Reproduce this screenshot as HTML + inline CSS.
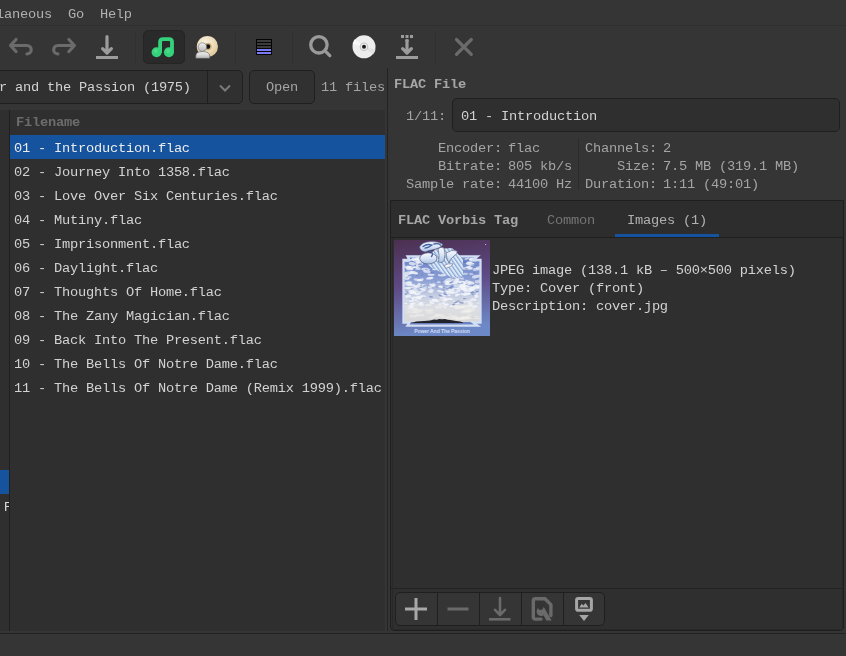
<!DOCTYPE html>
<html><head><meta charset="utf-8">
<style>
*{margin:0;padding:0;box-sizing:border-box}
html,body{width:846px;height:656px;overflow:hidden;background:#353535}
body{position:relative;font-family:"Liberation Mono",monospace;font-size:13.7px;letter-spacing:-0.22px;color:#d2d2d2}
.a{position:absolute}
.t{position:absolute;white-space:pre;line-height:16px;margin-top:2px;will-change:transform}
svg{position:absolute;overflow:visible}
</style></head><body>
<!-- menu bar -->
<div class="a" style="left:0;top:25px;width:846px;height:1px;background:#2f2f2f"></div>
<div class="t" style="left:-52px;top:5px;color:#b0b0b0">Miscellaneous  Go  Help</div>

<!-- toolbar -->
<div class="a" style="left:135px;top:31px;width:1px;height:33px;background:#303030"></div>
<div class="a" style="left:235px;top:31px;width:1px;height:33px;background:#303030"></div>
<div class="a" style="left:292px;top:31px;width:1px;height:33px;background:#303030"></div>
<div class="a" style="left:435px;top:31px;width:1px;height:33px;background:#303030"></div>
<div class="a" style="left:143px;top:30px;width:42px;height:34px;border-radius:5px;background:#2a2a2a;border:1px solid #242424"></div>

<svg style="left:0;top:0" width="846" height="100" viewBox="0 0 846 100">
 <g fill="none" stroke-linecap="round" stroke-linejoin="round" stroke-width="3.2">
  <path stroke="#6b6b6b" d="M16 39.5 L10.5 45.5 L16 51.5 M10.5 45.5 H27 A4.2 4.2 0 0 1 27 53.9"/>
  <path stroke="#6b6b6b" transform="translate(84.9 0) scale(-1 1)" d="M16 39.5 L10.5 45.5 L16 51.5 M10.5 45.5 H27 A4.2 4.2 0 0 1 27 53.9"/>
  <path stroke="#9c9c9c" d="M107 36.7 V52.5 M102.6 48.6 L107 53 L111.4 48.6"/>
  <path stroke="#9c9c9c" d="M407 40.5 V52.5 M402.6 48.6 L407 53 L411.4 48.6" />
  <circle cx="318.9" cy="44.8" r="8.2" stroke="#9a9a9a" stroke-width="3.3"/>
  <path stroke="#9a9a9a" stroke-width="3.3" d="M324.8 50.7 L329.8 55.7"/>
  <path stroke="#6b6b6b" d="M456.5 39.5 L471.3 54.3 M471.3 39.5 L456.5 54.3"/>
  <path stroke="#34d27b" stroke-width="3.8" stroke-linecap="butt" d="M160.1 53 V42 Q160.1 39.1 163 39.1 H169.1 Q172 39.1 172 42 V53"/>
 </g>
 <rect x="96" y="56" width="22" height="3" fill="#9c9c9c"/>
 <rect x="396" y="56" width="22" height="3" fill="#9c9c9c"/>
 <path fill="#9c9c9c" d="M405.3 39.5 h3.4 v2 h-3.4z"/>
 <rect x="401" y="35" width="3" height="3" fill="#9c9c9c"/>
 <rect x="405.5" y="35" width="3" height="3" fill="#9c9c9c"/>
 <rect x="410" y="35" width="3" height="3" fill="#9c9c9c"/>
 <circle cx="156.6" cy="52.3" r="5" fill="#34d27b"/>
 <circle cx="168.9" cy="52.3" r="5" fill="#34d27b"/>
 <circle cx="155.8" cy="51" r="2" fill="#5fe39a" opacity=".5"/>
 <circle cx="168.1" cy="51" r="2" fill="#5fe39a" opacity=".5"/>
 <!-- equalizer -->
 <rect x="256" y="39" width="16" height="16" fill="#050505"/>
 <rect x="257" y="40" width="14" height="2" fill="#3c3c3c"/>
 <rect x="257" y="43" width="14" height="2" fill="#3c3c3c"/>
 <rect x="257" y="46" width="14" height="2" fill="#3c3c3c"/>
 <rect x="257" y="49" width="14" height="2" fill="#7a7af5"/>
 <rect x="257" y="52" width="14" height="2" fill="#7a7af5"/>
 <!-- white cd -->
 <circle cx="364" cy="46.8" r="11.5" fill="#eeeeee"/>
 <path d="M364 46.8 L352.5 44 A11.5 11.5 0 0 1 355 39 Z" fill="#f8f8f8"/>
 <path d="M364 46.8 L375.5 49.6 A11.5 11.5 0 0 1 373 54.6 Z" fill="#e2e2e2"/>
 <circle cx="364" cy="46.8" r="4.3" fill="#c4c4c4"/>
 <circle cx="364" cy="46.8" r="3.2" fill="#ececec"/>
 <circle cx="364" cy="46.8" r="2" fill="#1e1e1e"/>
 <!-- cd with person -->
 <defs>
  <radialGradient id="cdg" cx="0.4" cy="0.35" r="0.7">
   <stop offset="0" stop-color="#faf4e6"/><stop offset="0.6" stop-color="#ecdcb8"/><stop offset="1" stop-color="#dcc494"/>
  </radialGradient>
  <linearGradient id="pg" x1="0" y1="0" x2="0" y2="1">
   <stop offset="0" stop-color="#f4f4f4"/><stop offset="1" stop-color="#b8b8b8"/>
  </linearGradient>
 </defs>
 <circle cx="207.4" cy="46.6" r="10.6" fill="url(#cdg)"/>
 <circle cx="208" cy="46.6" r="3.8" fill="#d2b47e"/>
 <circle cx="208" cy="46.6" r="2.3" fill="#141414"/>
 <path d="M195.8 58.3 V56 Q195.8 51.6 202.7 51.6 Q209.7 51.6 209.7 56 V58.3 Z" fill="url(#pg)" stroke="#5a5a5a" stroke-width=".6"/>
 <circle cx="202.4" cy="47.1" r="4.3" fill="url(#pg)" stroke="#666" stroke-width=".6"/>
 <!-- combo chevron -->
 <path d="M220 85.5 L225 90.5 L230 85.5" fill="none" stroke="#7a7a7a" stroke-width="2"/>
</svg>

<!-- combo -->
<div class="a" style="left:-10px;top:70px;width:253px;height:34px;border:1px solid #1f1f1f;border-radius:5px;background:#303030"></div>
<div class="a" style="left:207px;top:71px;width:1px;height:32px;background:#1f1f1f"></div>
<div class="t" style="left:-1px;top:78px">r and the Passion (1975)</div>
<!-- open button -->
<div class="a" style="left:249px;top:70px;width:66px;height:34px;border:1px solid #1f1f1f;border-radius:5px;background:#313131"></div>
<div class="t" style="left:266px;top:78px;color:#a4a4a4">Open</div>
<div class="t" style="left:321px;top:78px;color:#a4a4a4">11 files</div>
<svg style="left:0;top:0" width="846" height="110" viewBox="0 0 846 110">
 <path d="M220 85.5 L225 90.5 L230 85.5" fill="none" stroke="#7a7a7a" stroke-width="2"/>
</svg>

<!-- left file list -->
<div class="a" style="left:0;top:110px;width:385px;height:521px;background:#2f2f2f"></div>
<div class="a" style="left:9px;top:110px;width:1px;height:521px;background:#1f1f1f"></div>
<div class="a" style="left:387px;top:68px;width:1px;height:563px;background:#232323"></div>
<div class="a" style="left:0;top:633px;width:846px;height:1px;background:#222222"></div>

<div class="t" style="left:16px;top:113px;font-weight:bold;color:#6c6c6c">Filename</div>
<div class="a" style="left:10px;top:135px;width:375px;height:24px;background:#15539e"></div>
<div class="t" style="left:14px;top:139px;color:#ececec">01 - Introduction.flac</div>
<div class="t" style="left:14px;top:163px">02 - Journey Into 1358.flac</div>
<div class="t" style="left:14px;top:187px">03 - Love Over Six Centuries.flac</div>
<div class="t" style="left:14px;top:211px">04 - Mutiny.flac</div>
<div class="t" style="left:14px;top:235px">05 - Imprisonment.flac</div>
<div class="t" style="left:14px;top:259px">06 - Daylight.flac</div>
<div class="t" style="left:14px;top:283px">07 - Thoughts Of Home.flac</div>
<div class="t" style="left:14px;top:307px">08 - The Zany Magician.flac</div>
<div class="t" style="left:14px;top:331px">09 - Back Into The Present.flac</div>
<div class="t" style="left:14px;top:355px">10 - The Bells Of Notre Dame.flac</div>
<div class="t" style="left:14px;top:379px">11 - The Bells Of Notre Dame (Remix 1999).flac</div>

<div class="a" style="left:0;top:470px;width:9px;height:24px;background:#15539e"></div>
<div class="t" style="left:4px;top:497px;font-family:'Liberation Sans';letter-spacing:0;font-size:13px;color:#d8d8d8;width:5px;overflow:hidden">F</div>

<!-- right panel -->
<div class="t" style="left:394px;top:75px;font-weight:bold;color:#a6a6a6">FLAC File</div>
<div class="t" style="left:406px;top:107px;color:#a4a4a4">1/11:</div>
<div class="a" style="left:452px;top:98px;width:388px;height:34px;border:1px solid #1f1f1f;border-radius:5px;background:#2f2f2f"></div>
<div class="t" style="left:461px;top:107px">01 - Introduction</div>

<div class="t" style="left:438px;top:139px;color:#a4a4a4">Encoder:</div>
<div class="t" style="left:438px;top:157px;color:#a4a4a4">Bitrate:</div>
<div class="t" style="left:406px;top:175px;color:#a4a4a4">Sample rate:</div>
<div class="t" style="left:508px;top:139px;color:#a4a4a4">flac</div>
<div class="t" style="left:508px;top:157px;color:#a4a4a4">805 kb/s</div>
<div class="t" style="left:508px;top:175px;color:#a4a4a4">44100 Hz</div>
<div class="a" style="left:578px;top:138px;width:1px;height:52px;background:#2c2c2c"></div>
<div class="t" style="left:585px;top:139px;color:#a4a4a4">Channels:</div>
<div class="t" style="left:617px;top:157px;color:#a4a4a4">Size:</div>
<div class="t" style="left:585px;top:175px;color:#a4a4a4">Duration:</div>
<div class="t" style="left:663px;top:139px;color:#a4a4a4">2</div>
<div class="t" style="left:663px;top:157px;color:#a4a4a4">7.5 MB (319.1 MB)</div>
<div class="t" style="left:663px;top:175px;color:#a4a4a4">1:11 (49:01)</div>

<!-- tab widget -->
<div class="a" style="left:390px;top:200px;width:454px;height:431px;border:1px solid #1f1f1f;border-radius:0 0 4px 4px;background:#2f2f2f"></div>
<div class="a" style="left:391px;top:201px;width:452px;height:36px;background:#2d2d2d"></div>
<div class="a" style="left:391px;top:237px;width:452px;height:1px;background:#1f1f1f"></div>
<div class="t" style="left:398px;top:211px;font-weight:bold;color:#a6a6a6">FLAC Vorbis Tag</div>
<div class="t" style="left:547px;top:211px;color:#757575">Common</div>
<div class="t" style="left:627px;top:211px;color:#b0b0b0">Images (1)</div>
<div class="a" style="left:615px;top:234px;width:104px;height:3px;background:#15539e"></div>

<svg style="left:394px;top:240px" width="96" height="96" viewBox="0 0 96 96">
 <defs>
  <linearGradient id="cbg" x1="0" y1="0" x2="0.15" y2="1">
   <stop offset="0" stop-color="#4c3050"/><stop offset="0.5" stop-color="#5e4a86"/><stop offset="1" stop-color="#6d88c6"/>
  </linearGradient>
  <linearGradient id="sky" x1="0" y1="0" x2="0" y2="1">
   <stop offset="0" stop-color="#6a82c8"/><stop offset="0.35" stop-color="#8a9ed4"/><stop offset="0.6" stop-color="#c6cee2"/><stop offset="0.8" stop-color="#dcdee2"/><stop offset="1" stop-color="#d8d8d8"/>
  </linearGradient>
  <linearGradient id="lface" x1="0" y1="0" x2="0" y2="1">
   <stop offset="0" stop-color="#f8fafe"/><stop offset="0.5" stop-color="#d8e4f4"/><stop offset="1" stop-color="#a8c0e4"/>
  </linearGradient>
  <pattern id="stripes" width="3.2" height="3.2" patternUnits="userSpaceOnUse" patternTransform="rotate(-35)">
   <rect width="3.2" height="3.2" fill="#dce8f6"/><rect width="1.2" height="3.2" fill="#86a6d4"/>
  </pattern>
  <clipPath id="skyclip"><path d="M10 82 V20 H15.5 L13.5 16.3 H83.5 L79 20 H86.5 V82 Z"/></clipPath>
 </defs>
 <rect width="96" height="96" fill="url(#cbg)"/>
 <path d="M10 82 V20 H15.5 L13.5 16.3 H83.5 L79 20 H86.5 V82 Z" fill="url(#sky)"/>
 <g clip-path="url(#skyclip)"><ellipse cx="23.2" cy="39.8" rx="3.6" ry="1.4" fill="#f2f5fa" fill-opacity="0.63" transform="rotate(12 23.2 39.8)"/><ellipse cx="70.8" cy="33.9" rx="3.3" ry="1.1" fill="#f2f5fa" fill-opacity="0.55" transform="rotate(-5 70.8 33.9)"/><ellipse cx="54.3" cy="19.3" rx="4.0" ry="1.4" fill="#f2f5fa" fill-opacity="0.63" transform="rotate(-18 54.3 19.3)"/><ellipse cx="84.8" cy="41.4" rx="4.2" ry="1.8" fill="#f2f5fa" fill-opacity="0.56" transform="rotate(-7 84.8 41.4)"/><ellipse cx="47.8" cy="20.8" rx="4.4" ry="1.6" fill="#f2f5fa" fill-opacity="0.60" transform="rotate(13 47.8 20.8)"/><ellipse cx="20.2" cy="47.6" rx="3.1" ry="1.3" fill="#f2f5fa" fill-opacity="0.67" transform="rotate(-1 20.2 47.6)"/><ellipse cx="24.8" cy="18.2" rx="4.2" ry="1.4" fill="#f2f5fa" fill-opacity="0.82" transform="rotate(-12 24.8 18.2)"/><ellipse cx="82.7" cy="46.5" rx="3.9" ry="1.8" fill="#f2f5fa" fill-opacity="0.75" transform="rotate(9 82.7 46.5)"/><ellipse cx="20.1" cy="32.7" rx="4.1" ry="1.4" fill="#f2f5fa" fill-opacity="0.87" transform="rotate(16 20.1 32.7)"/><ellipse cx="41.3" cy="29.1" rx="3.1" ry="1.2" fill="#f2f5fa" fill-opacity="0.90" transform="rotate(-5 41.3 29.1)"/><ellipse cx="13.0" cy="20.1" rx="3.8" ry="1.9" fill="#f2f5fa" fill-opacity="0.72" transform="rotate(-0 13.0 20.1)"/><ellipse cx="51.7" cy="41.7" rx="2.6" ry="1.1" fill="#f2f5fa" fill-opacity="0.74" transform="rotate(5 51.7 41.7)"/><ellipse cx="24.4" cy="22.6" rx="2.9" ry="1.4" fill="#f2f5fa" fill-opacity="0.67" transform="rotate(4 24.4 22.6)"/><ellipse cx="33.7" cy="20.4" rx="2.2" ry="1.0" fill="#f2f5fa" fill-opacity="0.82" transform="rotate(-5 33.7 20.4)"/><ellipse cx="61.6" cy="39.3" rx="4.2" ry="2.1" fill="#f2f5fa" fill-opacity="0.69" transform="rotate(20 61.6 39.3)"/><ellipse cx="82.1" cy="36.5" rx="4.2" ry="1.7" fill="#f2f5fa" fill-opacity="0.68" transform="rotate(-10 82.1 36.5)"/><ellipse cx="75.8" cy="22.4" rx="2.2" ry="1.0" fill="#f2f5fa" fill-opacity="0.82" transform="rotate(-1 75.8 22.4)"/><ellipse cx="72.9" cy="18.7" rx="2.6" ry="0.9" fill="#f2f5fa" fill-opacity="0.70" transform="rotate(-13 72.9 18.7)"/><ellipse cx="16.1" cy="28.2" rx="4.2" ry="2.1" fill="#f2f5fa" fill-opacity="0.81" transform="rotate(-1 16.1 28.2)"/><ellipse cx="29.7" cy="48.6" rx="3.3" ry="1.5" fill="#f2f5fa" fill-opacity="0.56" transform="rotate(-12 29.7 48.6)"/><ellipse cx="73.0" cy="43.2" rx="4.2" ry="1.8" fill="#f2f5fa" fill-opacity="0.70" transform="rotate(3 73.0 43.2)"/><ellipse cx="73.9" cy="27.2" rx="3.3" ry="1.2" fill="#f2f5fa" fill-opacity="0.82" transform="rotate(-20 73.9 27.2)"/><ellipse cx="61.7" cy="48.5" rx="2.1" ry="0.9" fill="#f2f5fa" fill-opacity="0.78" transform="rotate(14 61.7 48.5)"/><ellipse cx="54.2" cy="25.5" rx="3.0" ry="1.5" fill="#f2f5fa" fill-opacity="0.87" transform="rotate(-15 54.2 25.5)"/><ellipse cx="18.0" cy="20.1" rx="2.1" ry="0.8" fill="#f2f5fa" fill-opacity="0.60" transform="rotate(15 18.0 20.1)"/><ellipse cx="59.5" cy="21.2" rx="3.3" ry="1.2" fill="#f2f5fa" fill-opacity="0.72" transform="rotate(-11 59.5 21.2)"/><ellipse cx="23.3" cy="23.1" rx="2.9" ry="1.3" fill="#f2f5fa" fill-opacity="0.74" transform="rotate(-18 23.3 23.1)"/><ellipse cx="63.6" cy="45.8" rx="3.9" ry="1.8" fill="#f2f5fa" fill-opacity="0.55" transform="rotate(-1 63.6 45.8)"/><ellipse cx="15.7" cy="42.2" rx="2.4" ry="1.1" fill="#f2f5fa" fill-opacity="0.64" transform="rotate(8 15.7 42.2)"/><ellipse cx="34.2" cy="18.4" rx="3.0" ry="1.1" fill="#f2f5fa" fill-opacity="0.87" transform="rotate(-8 34.2 18.4)"/><ellipse cx="48.2" cy="35.1" rx="4.4" ry="1.4" fill="#f2f5fa" fill-opacity="0.76" transform="rotate(0 48.2 35.1)"/><ellipse cx="65.4" cy="48.9" rx="2.8" ry="1.2" fill="#f2f5fa" fill-opacity="0.73" transform="rotate(2 65.4 48.9)"/><ellipse cx="15.7" cy="43.9" rx="4.4" ry="1.6" fill="#f2f5fa" fill-opacity="0.66" transform="rotate(20 15.7 43.9)"/><ellipse cx="19.0" cy="19.5" rx="2.2" ry="1.0" fill="#f2f5fa" fill-opacity="0.82" transform="rotate(-2 19.0 19.5)"/><ellipse cx="57.0" cy="17.7" rx="3.6" ry="1.4" fill="#f2f5fa" fill-opacity="0.73" transform="rotate(-4 57.0 17.7)"/><ellipse cx="40.7" cy="24.4" rx="2.1" ry="0.8" fill="#f2f5fa" fill-opacity="0.64" transform="rotate(8 40.7 24.4)"/><ellipse cx="71.5" cy="40.9" rx="3.1" ry="1.1" fill="#f2f5fa" fill-opacity="0.68" transform="rotate(-1 71.5 40.9)"/><ellipse cx="57.8" cy="48.8" rx="2.2" ry="0.9" fill="#f2f5fa" fill-opacity="0.72" transform="rotate(9 57.8 48.8)"/><ellipse cx="76.9" cy="42.7" rx="3.6" ry="1.6" fill="#f2f5fa" fill-opacity="0.78" transform="rotate(14 76.9 42.7)"/><ellipse cx="62.7" cy="39.5" rx="2.6" ry="1.3" fill="#f2f5fa" fill-opacity="0.69" transform="rotate(5 62.7 39.5)"/><ellipse cx="72.0" cy="48.8" rx="4.5" ry="1.3" fill="#f2f5fa" fill-opacity="0.66" transform="rotate(-8 72.0 48.8)"/><ellipse cx="40.0" cy="21.8" rx="3.4" ry="1.1" fill="#f2f5fa" fill-opacity="0.66" transform="rotate(18 40.0 21.8)"/><ellipse cx="65.9" cy="32.3" rx="2.3" ry="1.1" fill="#f2f5fa" fill-opacity="0.80" transform="rotate(-12 65.9 32.3)"/><ellipse cx="35.8" cy="38.2" rx="3.7" ry="1.3" fill="#f2f5fa" fill-opacity="0.88" transform="rotate(-7 35.8 38.2)"/><ellipse cx="29.8" cy="44.9" rx="2.4" ry="1.0" fill="#f2f5fa" fill-opacity="0.62" transform="rotate(4 29.8 44.9)"/><ellipse cx="31.5" cy="29.5" rx="4.4" ry="1.7" fill="#f2f5fa" fill-opacity="0.70" transform="rotate(5 31.5 29.5)"/><ellipse cx="31.8" cy="22.8" rx="3.0" ry="1.0" fill="#f2f5fa" fill-opacity="0.62" transform="rotate(18 31.8 22.8)"/><ellipse cx="13.5" cy="43.7" rx="4.3" ry="1.9" fill="#f2f5fa" fill-opacity="0.56" transform="rotate(0 13.5 43.7)"/><ellipse cx="13.9" cy="37.1" rx="3.8" ry="1.3" fill="#f2f5fa" fill-opacity="0.55" transform="rotate(2 13.9 37.1)"/><ellipse cx="18.0" cy="27.2" rx="3.1" ry="1.5" fill="#f2f5fa" fill-opacity="0.68" transform="rotate(-15 18.0 27.2)"/><ellipse cx="69.6" cy="44.1" rx="3.3" ry="1.0" fill="#f2f5fa" fill-opacity="0.62" transform="rotate(-4 69.6 44.1)"/><ellipse cx="51.8" cy="24.4" rx="4.0" ry="1.9" fill="#f2f5fa" fill-opacity="0.87" transform="rotate(15 51.8 24.4)"/><ellipse cx="12.3" cy="36.2" rx="2.2" ry="1.1" fill="#f2f5fa" fill-opacity="0.81" transform="rotate(10 12.3 36.2)"/><ellipse cx="24.9" cy="19.0" rx="4.0" ry="1.7" fill="#f2f5fa" fill-opacity="0.77" transform="rotate(-1 24.9 19.0)"/><ellipse cx="70.2" cy="28.2" rx="2.7" ry="1.0" fill="#f2f5fa" fill-opacity="0.65" transform="rotate(5 70.2 28.2)"/><ellipse cx="76.9" cy="19.3" rx="2.2" ry="0.9" fill="#f2f5fa" fill-opacity="0.79" transform="rotate(-12 76.9 19.3)"/><ellipse cx="31.0" cy="18.9" rx="2.1" ry="0.8" fill="#f2f5fa" fill-opacity="0.79" transform="rotate(6 31.0 18.9)"/><ellipse cx="22.7" cy="20.4" rx="4.3" ry="1.8" fill="#f2f5fa" fill-opacity="0.69" transform="rotate(8 22.7 20.4)"/><ellipse cx="64.9" cy="34.3" rx="2.2" ry="1.0" fill="#f2f5fa" fill-opacity="0.62" transform="rotate(-18 64.9 34.3)"/><ellipse cx="37.1" cy="34.6" rx="3.6" ry="1.2" fill="#f2f5fa" fill-opacity="0.80" transform="rotate(-0 37.1 34.6)"/><ellipse cx="23.0" cy="45.1" rx="4.0" ry="1.9" fill="#f2f5fa" fill-opacity="0.79" transform="rotate(-11 23.0 45.1)"/><ellipse cx="68.5" cy="46.8" rx="3.3" ry="1.6" fill="#f2f5fa" fill-opacity="0.89" transform="rotate(-4 68.5 46.8)"/><ellipse cx="80.7" cy="47.9" rx="4.0" ry="1.2" fill="#f2f5fa" fill-opacity="0.67" transform="rotate(5 80.7 47.9)"/><ellipse cx="55.9" cy="41.9" rx="3.6" ry="1.2" fill="#f2f5fa" fill-opacity="0.88" transform="rotate(1 55.9 41.9)"/><ellipse cx="76.2" cy="23.8" rx="4.5" ry="1.8" fill="#f2f5fa" fill-opacity="0.82" transform="rotate(10 76.2 23.8)"/><ellipse cx="76.3" cy="29.0" rx="2.2" ry="0.8" fill="#f2f5fa" fill-opacity="0.61" transform="rotate(2 76.3 29.0)"/><ellipse cx="71.3" cy="29.0" rx="2.3" ry="0.7" fill="#f2f5fa" fill-opacity="0.70" transform="rotate(3 71.3 29.0)"/><ellipse cx="12.9" cy="39.0" rx="2.5" ry="0.8" fill="#f2f5fa" fill-opacity="0.87" transform="rotate(1 12.9 39.0)"/><ellipse cx="77.2" cy="34.0" rx="2.3" ry="0.8" fill="#f2f5fa" fill-opacity="0.70" transform="rotate(6 77.2 34.0)"/><ellipse cx="68.0" cy="41.8" rx="3.6" ry="1.3" fill="#f2f5fa" fill-opacity="0.70" transform="rotate(-5 68.0 41.8)"/><ellipse cx="47.2" cy="25.8" rx="3.3" ry="1.3" fill="#f2f5fa" fill-opacity="0.56" transform="rotate(13 47.2 25.8)"/><ellipse cx="54.4" cy="43.5" rx="3.8" ry="1.7" fill="#f2f5fa" fill-opacity="0.90" transform="rotate(-5 54.4 43.5)"/><ellipse cx="40.1" cy="17.1" rx="3.7" ry="1.5" fill="#f2f5fa" fill-opacity="0.75" transform="rotate(20 40.1 17.1)"/><ellipse cx="25.6" cy="24.5" rx="3.8" ry="1.8" fill="#f2f5fa" fill-opacity="0.72" transform="rotate(-18 25.6 24.5)"/><ellipse cx="38.4" cy="44.3" rx="3.2" ry="1.3" fill="#f2f5fa" fill-opacity="0.69" transform="rotate(5 38.4 44.3)"/><ellipse cx="55.3" cy="39.9" rx="4.2" ry="1.9" fill="#f2f5fa" fill-opacity="0.68" transform="rotate(-10 55.3 39.9)"/><ellipse cx="68.9" cy="43.2" rx="4.3" ry="1.5" fill="#f2f5fa" fill-opacity="0.85" transform="rotate(16 68.9 43.2)"/><ellipse cx="16.7" cy="27.2" rx="3.6" ry="1.2" fill="#f2f5fa" fill-opacity="0.84" transform="rotate(-9 16.7 27.2)"/><ellipse cx="61.5" cy="26.8" rx="2.5" ry="0.9" fill="#f2f5fa" fill-opacity="0.72" transform="rotate(9 61.5 26.8)"/><ellipse cx="27.1" cy="39.7" rx="2.8" ry="1.2" fill="#f2f5fa" fill-opacity="0.68" transform="rotate(-12 27.1 39.7)"/><ellipse cx="21.4" cy="18.9" rx="3.7" ry="1.4" fill="#f2f5fa" fill-opacity="0.59" transform="rotate(15 21.4 18.9)"/><ellipse cx="59.5" cy="17.7" rx="3.8" ry="1.6" fill="#f2f5fa" fill-opacity="0.71" transform="rotate(0 59.5 17.7)"/><ellipse cx="82.2" cy="29.3" rx="3.6" ry="1.5" fill="#f2f5fa" fill-opacity="0.68" transform="rotate(-6 82.2 29.3)"/><ellipse cx="66.9" cy="38.0" rx="3.1" ry="1.3" fill="#f2f5fa" fill-opacity="0.63" transform="rotate(12 66.9 38.0)"/><ellipse cx="12.5" cy="38.2" rx="3.1" ry="1.1" fill="#f2f5fa" fill-opacity="0.76" transform="rotate(3 12.5 38.2)"/><ellipse cx="17.4" cy="33.2" rx="2.4" ry="1.1" fill="#f2f5fa" fill-opacity="0.66" transform="rotate(-7 17.4 33.2)"/><ellipse cx="26.9" cy="18.6" rx="2.5" ry="0.8" fill="#f2f5fa" fill-opacity="0.77" transform="rotate(14 26.9 18.6)"/><ellipse cx="27.4" cy="20.7" rx="3.3" ry="1.1" fill="#f2f5fa" fill-opacity="0.69" transform="rotate(10 27.4 20.7)"/><ellipse cx="26.0" cy="40.1" rx="3.3" ry="1.1" fill="#f2f5fa" fill-opacity="0.63" transform="rotate(4 26.0 40.1)"/><ellipse cx="18.1" cy="23.7" rx="3.4" ry="1.6" fill="#f2f5fa" fill-opacity="0.73" transform="rotate(7 18.1 23.7)"/><ellipse cx="11.7" cy="27.0" rx="2.8" ry="1.3" fill="#f2f5fa" fill-opacity="0.68" transform="rotate(11 11.7 27.0)"/><ellipse cx="13.5" cy="33.4" rx="4.2" ry="1.9" fill="#f2f5fa" fill-opacity="0.75" transform="rotate(-13 13.5 33.4)"/><ellipse cx="79.5" cy="19.6" rx="4.4" ry="2.0" fill="#f2f5fa" fill-opacity="0.80" transform="rotate(1 79.5 19.6)"/><ellipse cx="23.1" cy="28.2" rx="3.7" ry="1.6" fill="#f2f5fa" fill-opacity="0.69" transform="rotate(12 23.1 28.2)"/><ellipse cx="15.0" cy="26.5" rx="2.2" ry="0.8" fill="#f2f5fa" fill-opacity="0.83" transform="rotate(10 15.0 26.5)"/><ellipse cx="22.1" cy="27.2" rx="2.3" ry="1.0" fill="#f2f5fa" fill-opacity="0.70" transform="rotate(-11 22.1 27.2)"/><ellipse cx="38.7" cy="45.6" rx="3.1" ry="1.3" fill="#f2f5fa" fill-opacity="0.77" transform="rotate(-1 38.7 45.6)"/><ellipse cx="52.2" cy="29.0" rx="2.5" ry="1.0" fill="#f2f5fa" fill-opacity="0.66" transform="rotate(-7 52.2 29.0)"/><ellipse cx="24.8" cy="47.1" rx="3.1" ry="1.0" fill="#f2f5fa" fill-opacity="0.56" transform="rotate(-11 24.8 47.1)"/><ellipse cx="75.3" cy="28.1" rx="3.7" ry="1.3" fill="#f2f5fa" fill-opacity="0.78" transform="rotate(-2 75.3 28.1)"/><ellipse cx="65.5" cy="34.4" rx="2.9" ry="1.0" fill="#f2f5fa" fill-opacity="0.76" transform="rotate(13 65.5 34.4)"/><ellipse cx="62.2" cy="32.8" rx="2.8" ry="1.3" fill="#f2f5fa" fill-opacity="0.85" transform="rotate(-14 62.2 32.8)"/><ellipse cx="61.3" cy="42.5" rx="3.7" ry="1.8" fill="#f2f5fa" fill-opacity="0.86" transform="rotate(-10 61.3 42.5)"/><ellipse cx="84.8" cy="27.8" rx="2.9" ry="1.5" fill="#f2f5fa" fill-opacity="0.61" transform="rotate(-4 84.8 27.8)"/><ellipse cx="57.3" cy="26.0" rx="2.7" ry="1.2" fill="#f2f5fa" fill-opacity="0.76" transform="rotate(10 57.3 26.0)"/><ellipse cx="69.5" cy="45.8" rx="4.2" ry="2.0" fill="#f2f5fa" fill-opacity="0.89" transform="rotate(-0 69.5 45.8)"/><ellipse cx="62.9" cy="34.0" rx="4.4" ry="1.9" fill="#f2f5fa" fill-opacity="0.70" transform="rotate(7 62.9 34.0)"/><ellipse cx="32.8" cy="21.3" rx="3.0" ry="1.0" fill="#f2f5fa" fill-opacity="0.55" transform="rotate(-16 32.8 21.3)"/><ellipse cx="44.6" cy="42.2" rx="2.1" ry="0.9" fill="#f2f5fa" fill-opacity="0.59" transform="rotate(0 44.6 42.2)"/><ellipse cx="32.9" cy="31.7" rx="3.8" ry="1.4" fill="#f2f5fa" fill-opacity="0.69" transform="rotate(9 32.9 31.7)"/><ellipse cx="19.6" cy="53.0" rx="2.7" ry="1.3" fill="#f2f5fa" fill-opacity="0.89" transform="rotate(-7 19.6 53.0)"/><ellipse cx="57.3" cy="52.2" rx="2.7" ry="1.3" fill="#f2f5fa" fill-opacity="0.60" transform="rotate(-5 57.3 52.2)"/><ellipse cx="80.3" cy="53.1" rx="2.6" ry="1.2" fill="#f2f5fa" fill-opacity="0.65" transform="rotate(9 80.3 53.1)"/><ellipse cx="11.3" cy="52.8" rx="1.8" ry="0.7" fill="#f2f5fa" fill-opacity="0.62" transform="rotate(-14 11.3 52.8)"/><ellipse cx="70.4" cy="49.0" rx="2.5" ry="1.0" fill="#f2f5fa" fill-opacity="0.85" transform="rotate(10 70.4 49.0)"/><ellipse cx="57.0" cy="48.9" rx="2.8" ry="0.9" fill="#f2f5fa" fill-opacity="0.88" transform="rotate(-6 57.0 48.9)"/><ellipse cx="29.7" cy="50.0" rx="2.2" ry="1.0" fill="#f2f5fa" fill-opacity="0.85" transform="rotate(7 29.7 50.0)"/><ellipse cx="65.0" cy="50.6" rx="2.0" ry="0.7" fill="#f2f5fa" fill-opacity="0.70" transform="rotate(11 65.0 50.6)"/><ellipse cx="84.7" cy="46.9" rx="3.1" ry="1.5" fill="#f2f5fa" fill-opacity="0.71" transform="rotate(6 84.7 46.9)"/><ellipse cx="69.1" cy="49.3" rx="2.5" ry="1.3" fill="#f2f5fa" fill-opacity="0.86" transform="rotate(12 69.1 49.3)"/><ellipse cx="17.3" cy="61.4" rx="2.3" ry="1.1" fill="#f2f5fa" fill-opacity="0.61" transform="rotate(1 17.3 61.4)"/><ellipse cx="19.9" cy="63.5" rx="2.7" ry="0.8" fill="#f2f5fa" fill-opacity="0.66" transform="rotate(-11 19.9 63.5)"/><ellipse cx="58.0" cy="59.5" rx="1.6" ry="0.8" fill="#f2f5fa" fill-opacity="0.89" transform="rotate(-2 58.0 59.5)"/><ellipse cx="53.5" cy="53.4" rx="2.5" ry="1.0" fill="#f2f5fa" fill-opacity="0.70" transform="rotate(7 53.5 53.4)"/><ellipse cx="24.8" cy="51.9" rx="2.8" ry="1.0" fill="#f2f5fa" fill-opacity="0.57" transform="rotate(12 24.8 51.9)"/><ellipse cx="22.8" cy="54.5" rx="2.0" ry="0.7" fill="#f2f5fa" fill-opacity="0.67" transform="rotate(1 22.8 54.5)"/><ellipse cx="19.6" cy="57.3" rx="1.6" ry="0.5" fill="#f2f5fa" fill-opacity="0.62" transform="rotate(-8 19.6 57.3)"/><ellipse cx="36.3" cy="51.7" rx="2.9" ry="1.3" fill="#f2f5fa" fill-opacity="0.72" transform="rotate(8 36.3 51.7)"/><ellipse cx="61.8" cy="52.3" rx="2.5" ry="1.1" fill="#f2f5fa" fill-opacity="0.74" transform="rotate(8 61.8 52.3)"/><ellipse cx="57.8" cy="66.3" rx="1.9" ry="0.8" fill="#f2f5fa" fill-opacity="0.89" transform="rotate(1 57.8 66.3)"/><ellipse cx="78.0" cy="47.2" rx="2.7" ry="1.0" fill="#f2f5fa" fill-opacity="0.81" transform="rotate(-2 78.0 47.2)"/><ellipse cx="50.6" cy="50.7" rx="1.9" ry="0.9" fill="#f2f5fa" fill-opacity="0.78" transform="rotate(4 50.6 50.7)"/><ellipse cx="19.6" cy="51.7" rx="3.1" ry="1.1" fill="#f2f5fa" fill-opacity="0.74" transform="rotate(6 19.6 51.7)"/><ellipse cx="48.8" cy="57.7" rx="3.1" ry="1.4" fill="#f2f5fa" fill-opacity="0.63" transform="rotate(-2 48.8 57.7)"/><ellipse cx="42.1" cy="60.7" rx="2.6" ry="0.9" fill="#f2f5fa" fill-opacity="0.79" transform="rotate(-2 42.1 60.7)"/><ellipse cx="12.1" cy="51.7" rx="2.1" ry="0.7" fill="#f2f5fa" fill-opacity="0.78" transform="rotate(15 12.1 51.7)"/><ellipse cx="79.9" cy="59.5" rx="3.0" ry="1.2" fill="#f2f5fa" fill-opacity="0.76" transform="rotate(12 79.9 59.5)"/><ellipse cx="15.4" cy="53.3" rx="2.1" ry="0.8" fill="#f2f5fa" fill-opacity="0.70" transform="rotate(-13 15.4 53.3)"/><ellipse cx="61.3" cy="67.0" rx="1.9" ry="0.6" fill="#f2f5fa" fill-opacity="0.67" transform="rotate(9 61.3 67.0)"/><ellipse cx="27.8" cy="62.7" rx="1.8" ry="0.8" fill="#f2f5fa" fill-opacity="0.80" transform="rotate(5 27.8 62.7)"/><ellipse cx="17.2" cy="67.0" rx="2.9" ry="1.2" fill="#f2f5fa" fill-opacity="0.85" transform="rotate(3 17.2 67.0)"/><ellipse cx="23.5" cy="54.1" rx="2.9" ry="1.1" fill="#f2f5fa" fill-opacity="0.56" transform="rotate(-10 23.5 54.1)"/><ellipse cx="24.8" cy="58.5" rx="2.6" ry="1.0" fill="#f2f5fa" fill-opacity="0.69" transform="rotate(14 24.8 58.5)"/><ellipse cx="36.4" cy="60.5" rx="1.8" ry="0.7" fill="#f2f5fa" fill-opacity="0.61" transform="rotate(-12 36.4 60.5)"/><ellipse cx="35.9" cy="47.6" rx="2.1" ry="0.9" fill="#f2f5fa" fill-opacity="0.74" transform="rotate(9 35.9 47.6)"/><ellipse cx="46.3" cy="46.9" rx="2.7" ry="1.0" fill="#f2f5fa" fill-opacity="0.81" transform="rotate(14 46.3 46.9)"/><ellipse cx="49.8" cy="50.8" rx="2.1" ry="0.8" fill="#f2f5fa" fill-opacity="0.66" transform="rotate(-12 49.8 50.8)"/><ellipse cx="40.5" cy="60.1" rx="2.9" ry="1.3" fill="#f2f5fa" fill-opacity="0.86" transform="rotate(9 40.5 60.1)"/><ellipse cx="41.4" cy="59.8" rx="1.6" ry="0.7" fill="#f2f5fa" fill-opacity="0.80" transform="rotate(-7 41.4 59.8)"/><ellipse cx="45.9" cy="51.3" rx="2.9" ry="1.1" fill="#f2f5fa" fill-opacity="0.82" transform="rotate(13 45.9 51.3)"/><ellipse cx="68.5" cy="53.7" rx="2.1" ry="1.0" fill="#f2f5fa" fill-opacity="0.87" transform="rotate(-9 68.5 53.7)"/><ellipse cx="37.8" cy="63.1" rx="2.8" ry="1.0" fill="#f2f5fa" fill-opacity="0.71" transform="rotate(14 37.8 63.1)"/><ellipse cx="17.7" cy="51.3" rx="2.6" ry="1.3" fill="#f2f5fa" fill-opacity="0.88" transform="rotate(-1 17.7 51.3)"/><ellipse cx="69.5" cy="67.4" rx="2.1" ry="0.7" fill="#f2f5fa" fill-opacity="0.64" transform="rotate(8 69.5 67.4)"/><ellipse cx="21.3" cy="57.6" rx="3.1" ry="1.0" fill="#f2f5fa" fill-opacity="0.77" transform="rotate(1 21.3 57.6)"/><ellipse cx="82.5" cy="56.8" rx="2.3" ry="1.1" fill="#f2f5fa" fill-opacity="0.81" transform="rotate(-11 82.5 56.8)"/><ellipse cx="70.5" cy="54.2" rx="3.1" ry="1.6" fill="#f2f5fa" fill-opacity="0.72" transform="rotate(-3 70.5 54.2)"/><ellipse cx="27.8" cy="51.4" rx="1.9" ry="0.6" fill="#f2f5fa" fill-opacity="0.81" transform="rotate(-13 27.8 51.4)"/><ellipse cx="55.3" cy="58.8" rx="2.8" ry="1.1" fill="#f2f5fa" fill-opacity="0.87" transform="rotate(-7 55.3 58.8)"/><ellipse cx="17.9" cy="58.4" rx="2.0" ry="1.0" fill="#f2f5fa" fill-opacity="0.87" transform="rotate(6 17.9 58.4)"/><ellipse cx="72.7" cy="50.6" rx="2.3" ry="0.9" fill="#f2f5fa" fill-opacity="0.67" transform="rotate(-4 72.7 50.6)"/><ellipse cx="46.4" cy="60.0" rx="1.5" ry="0.6" fill="#f2f5fa" fill-opacity="0.59" transform="rotate(14 46.4 60.0)"/><ellipse cx="51.8" cy="58.6" rx="2.0" ry="0.9" fill="#f2f5fa" fill-opacity="0.80" transform="rotate(12 51.8 58.6)"/><ellipse cx="54.0" cy="51.2" rx="2.6" ry="0.8" fill="#f2f5fa" fill-opacity="0.81" transform="rotate(-6 54.0 51.2)"/><ellipse cx="64.2" cy="48.0" rx="2.5" ry="0.8" fill="#f2f5fa" fill-opacity="0.56" transform="rotate(-7 64.2 48.0)"/><ellipse cx="73.8" cy="53.9" rx="2.4" ry="1.1" fill="#f2f5fa" fill-opacity="0.89" transform="rotate(-7 73.8 53.9)"/><ellipse cx="62.4" cy="63.0" rx="2.8" ry="1.1" fill="#f2f5fa" fill-opacity="0.72" transform="rotate(9 62.4 63.0)"/><ellipse cx="29.6" cy="56.2" rx="2.6" ry="1.2" fill="#f2f5fa" fill-opacity="0.64" transform="rotate(5 29.6 56.2)"/><ellipse cx="27.1" cy="48.6" rx="2.3" ry="1.0" fill="#f2f5fa" fill-opacity="0.77" transform="rotate(13 27.1 48.6)"/><ellipse cx="23.2" cy="57.2" rx="2.3" ry="0.8" fill="#f2f5fa" fill-opacity="0.87" transform="rotate(-11 23.2 57.2)"/><ellipse cx="30.3" cy="45.9" rx="2.6" ry="1.1" fill="#f2f5fa" fill-opacity="0.63" transform="rotate(13 30.3 45.9)"/><ellipse cx="58.0" cy="49.6" rx="3.1" ry="1.5" fill="#f2f5fa" fill-opacity="0.66" transform="rotate(11 58.0 49.6)"/><ellipse cx="20.6" cy="53.0" rx="2.2" ry="1.1" fill="#f2f5fa" fill-opacity="0.65" transform="rotate(-3 20.6 53.0)"/><ellipse cx="26.3" cy="63.8" rx="1.8" ry="0.9" fill="#f2f5fa" fill-opacity="0.67" transform="rotate(1 26.3 63.8)"/><ellipse cx="75.9" cy="51.1" rx="2.4" ry="1.0" fill="#f2f5fa" fill-opacity="0.75" transform="rotate(-3 75.9 51.1)"/><ellipse cx="58.8" cy="52.2" rx="1.8" ry="0.5" fill="#f2f5fa" fill-opacity="0.76" transform="rotate(2 58.8 52.2)"/><ellipse cx="70.2" cy="48.6" rx="2.6" ry="1.0" fill="#f2f5fa" fill-opacity="0.73" transform="rotate(10 70.2 48.6)"/><ellipse cx="49.4" cy="55.0" rx="2.6" ry="0.9" fill="#f2f5fa" fill-opacity="0.86" transform="rotate(1 49.4 55.0)"/><ellipse cx="14.1" cy="56.1" rx="3.1" ry="1.5" fill="#f2f5fa" fill-opacity="0.70" transform="rotate(-7 14.1 56.1)"/><ellipse cx="80.3" cy="51.5" rx="1.5" ry="0.5" fill="#f2f5fa" fill-opacity="0.71" transform="rotate(5 80.3 51.5)"/><ellipse cx="16.0" cy="52.7" rx="2.7" ry="1.0" fill="#f2f5fa" fill-opacity="0.61" transform="rotate(6 16.0 52.7)"/><ellipse cx="43.3" cy="61.0" rx="2.3" ry="1.1" fill="#f2f5fa" fill-opacity="0.73" transform="rotate(14 43.3 61.0)"/><ellipse cx="71.2" cy="61.6" rx="2.3" ry="1.0" fill="#f2f5fa" fill-opacity="0.68" transform="rotate(-13 71.2 61.6)"/><ellipse cx="76.5" cy="63.6" rx="2.8" ry="1.3" fill="#f2f5fa" fill-opacity="0.74" transform="rotate(15 76.5 63.6)"/><ellipse cx="46.0" cy="67.6" rx="1.6" ry="0.6" fill="#f2f5fa" fill-opacity="0.75" transform="rotate(10 46.0 67.6)"/><ellipse cx="49.5" cy="63.2" rx="2.1" ry="0.9" fill="#f2f5fa" fill-opacity="0.83" transform="rotate(3 49.5 63.2)"/><ellipse cx="12.5" cy="60.1" rx="1.5" ry="0.5" fill="#f2f5fa" fill-opacity="0.59" transform="rotate(8 12.5 60.1)"/><ellipse cx="23.5" cy="61.5" rx="1.6" ry="0.6" fill="#f2f5fa" fill-opacity="0.79" transform="rotate(13 23.5 61.5)"/><ellipse cx="16.3" cy="59.1" rx="2.2" ry="0.9" fill="#f2f5fa" fill-opacity="0.58" transform="rotate(-14 16.3 59.1)"/><ellipse cx="16.8" cy="65.5" rx="2.3" ry="1.0" fill="#f2f5fa" fill-opacity="0.60" transform="rotate(6 16.8 65.5)"/><ellipse cx="77.7" cy="49.6" rx="2.8" ry="1.3" fill="#f2f5fa" fill-opacity="0.90" transform="rotate(2 77.7 49.6)"/><ellipse cx="58.7" cy="52.9" rx="2.8" ry="1.0" fill="#f2f5fa" fill-opacity="0.77" transform="rotate(4 58.7 52.9)"/><ellipse cx="84.2" cy="63.1" rx="1.7" ry="0.6" fill="#f2f5fa" fill-opacity="0.68" transform="rotate(-3 84.2 63.1)"/><ellipse cx="64.0" cy="51.0" rx="2.5" ry="1.0" fill="#f2f5fa" fill-opacity="0.66" transform="rotate(4 64.0 51.0)"/><ellipse cx="43.1" cy="67.5" rx="1.7" ry="0.8" fill="#f2f5fa" fill-opacity="0.77" transform="rotate(-1 43.1 67.5)"/><ellipse cx="16.8" cy="59.9" rx="2.9" ry="1.1" fill="#f2f5fa" fill-opacity="0.80" transform="rotate(1 16.8 59.9)"/><ellipse cx="17.7" cy="64.8" rx="2.0" ry="0.8" fill="#f2f5fa" fill-opacity="0.82" transform="rotate(11 17.7 64.8)"/><ellipse cx="74.2" cy="53.5" rx="2.9" ry="1.0" fill="#f2f5fa" fill-opacity="0.74" transform="rotate(-2 74.2 53.5)"/><ellipse cx="75.1" cy="61.6" rx="2.6" ry="1.2" fill="#f2f5fa" fill-opacity="0.67" transform="rotate(-2 75.1 61.6)"/><ellipse cx="18.6" cy="53.1" rx="1.8" ry="0.8" fill="#f2f5fa" fill-opacity="0.60" transform="rotate(12 18.6 53.1)"/><ellipse cx="55.4" cy="55.3" rx="1.7" ry="0.7" fill="#f2f5fa" fill-opacity="0.75" transform="rotate(-11 55.4 55.3)"/><ellipse cx="83.3" cy="53.3" rx="2.2" ry="0.8" fill="#f2f5fa" fill-opacity="0.68" transform="rotate(-7 83.3 53.3)"/><ellipse cx="74.2" cy="46.6" rx="2.1" ry="0.9" fill="#f2f5fa" fill-opacity="0.72" transform="rotate(-5 74.2 46.6)"/><ellipse cx="46.8" cy="46.4" rx="2.0" ry="0.8" fill="#f2f5fa" fill-opacity="0.82" transform="rotate(-2 46.8 46.4)"/><ellipse cx="41.7" cy="60.0" rx="2.0" ry="0.8" fill="#f2f5fa" fill-opacity="0.62" transform="rotate(4 41.7 60.0)"/><ellipse cx="50.9" cy="60.0" rx="3.0" ry="1.4" fill="#f2f5fa" fill-opacity="0.90" transform="rotate(-8 50.9 60.0)"/><ellipse cx="81.6" cy="55.2" rx="2.1" ry="0.8" fill="#f2f5fa" fill-opacity="0.87" transform="rotate(14 81.6 55.2)"/><ellipse cx="70.6" cy="51.9" rx="1.7" ry="0.6" fill="#f2f5fa" fill-opacity="0.79" transform="rotate(6 70.6 51.9)"/><ellipse cx="15.9" cy="45.1" rx="3.2" ry="1.2" fill="#f2f5fa" fill-opacity="0.56" transform="rotate(-1 15.9 45.1)"/><ellipse cx="18.2" cy="63.7" rx="2.4" ry="1.0" fill="#f2f5fa" fill-opacity="0.87" transform="rotate(-11 18.2 63.7)"/><ellipse cx="26.9" cy="63.1" rx="2.5" ry="1.0" fill="#f2f5fa" fill-opacity="0.67" transform="rotate(4 26.9 63.1)"/><ellipse cx="80.9" cy="66.8" rx="3.1" ry="1.5" fill="#f2f5fa" fill-opacity="0.60" transform="rotate(-14 80.9 66.8)"/><ellipse cx="72.4" cy="50.7" rx="2.4" ry="0.9" fill="#f2f5fa" fill-opacity="0.89" transform="rotate(-2 72.4 50.7)"/><ellipse cx="21.0" cy="49.7" rx="3.0" ry="1.4" fill="#f2f5fa" fill-opacity="0.60" transform="rotate(14 21.0 49.7)"/><ellipse cx="38.5" cy="61.7" rx="2.5" ry="1.2" fill="#f2f5fa" fill-opacity="0.72" transform="rotate(-14 38.5 61.7)"/><ellipse cx="52.3" cy="64.6" rx="2.2" ry="1.0" fill="#f2f5fa" fill-opacity="0.71" transform="rotate(-4 52.3 64.6)"/><ellipse cx="37.6" cy="50.3" rx="2.4" ry="1.2" fill="#f2f5fa" fill-opacity="0.76" transform="rotate(8 37.6 50.3)"/><ellipse cx="24.3" cy="53.5" rx="2.5" ry="0.9" fill="#f2f5fa" fill-opacity="0.55" transform="rotate(11 24.3 53.5)"/><ellipse cx="20.6" cy="60.2" rx="3.2" ry="1.1" fill="#f2f5fa" fill-opacity="0.64" transform="rotate(-5 20.6 60.2)"/><ellipse cx="51.1" cy="67.5" rx="1.7" ry="0.6" fill="#f2f5fa" fill-opacity="0.86" transform="rotate(-7 51.1 67.5)"/><ellipse cx="60.4" cy="61.6" rx="1.5" ry="0.5" fill="#f2f5fa" fill-opacity="0.82" transform="rotate(13 60.4 61.6)"/><ellipse cx="62.4" cy="55.7" rx="1.7" ry="0.7" fill="#f2f5fa" fill-opacity="0.59" transform="rotate(-5 62.4 55.7)"/><ellipse cx="13.6" cy="56.8" rx="2.3" ry="0.8" fill="#f2f5fa" fill-opacity="0.63" transform="rotate(-13 13.6 56.8)"/><ellipse cx="13.1" cy="47.9" rx="3.2" ry="1.0" fill="#f2f5fa" fill-opacity="0.80" transform="rotate(-1 13.1 47.9)"/><ellipse cx="54.5" cy="52.0" rx="3.2" ry="1.5" fill="#f2f5fa" fill-opacity="0.69" transform="rotate(-2 54.5 52.0)"/><ellipse cx="78.9" cy="48.6" rx="3.0" ry="1.3" fill="#f2f5fa" fill-opacity="0.75" transform="rotate(1 78.9 48.6)"/><ellipse cx="54.7" cy="47.1" rx="1.9" ry="0.7" fill="#f2f5fa" fill-opacity="0.63" transform="rotate(-12 54.7 47.1)"/><ellipse cx="63.7" cy="54.7" rx="2.8" ry="1.0" fill="#f2f5fa" fill-opacity="0.88" transform="rotate(-8 63.7 54.7)"/><ellipse cx="48.9" cy="54.7" rx="2.8" ry="0.9" fill="#f2f5fa" fill-opacity="0.74" transform="rotate(-1 48.9 54.7)"/><ellipse cx="57.2" cy="50.4" rx="2.4" ry="1.2" fill="#f2f5fa" fill-opacity="0.59" transform="rotate(14 57.2 50.4)"/><ellipse cx="82.5" cy="55.3" rx="1.6" ry="0.7" fill="#f2f5fa" fill-opacity="0.89" transform="rotate(-15 82.5 55.3)"/><ellipse cx="66.7" cy="62.9" rx="1.7" ry="0.7" fill="#f2f5fa" fill-opacity="0.60" transform="rotate(-12 66.7 62.9)"/><ellipse cx="49.6" cy="51.9" rx="2.6" ry="1.1" fill="#f2f5fa" fill-opacity="0.63" transform="rotate(13 49.6 51.9)"/><ellipse cx="11.5" cy="63.4" rx="2.0" ry="0.9" fill="#f2f5fa" fill-opacity="0.76" transform="rotate(-1 11.5 63.4)"/><ellipse cx="27.0" cy="64.7" rx="3.0" ry="1.5" fill="#f2f5fa" fill-opacity="0.76" transform="rotate(13 27.0 64.7)"/><ellipse cx="77.2" cy="60.3" rx="2.1" ry="0.9" fill="#f2f5fa" fill-opacity="0.67" transform="rotate(9 77.2 60.3)"/><ellipse cx="51.9" cy="64.9" rx="3.0" ry="1.4" fill="#f2f5fa" fill-opacity="0.62" transform="rotate(-5 51.9 64.9)"/><ellipse cx="17.3" cy="52.7" rx="1.8" ry="0.6" fill="#f2f5fa" fill-opacity="0.83" transform="rotate(-11 17.3 52.7)"/><ellipse cx="78.9" cy="66.2" rx="2.8" ry="1.0" fill="#f2f5fa" fill-opacity="0.65" transform="rotate(-1 78.9 66.2)"/><ellipse cx="56.8" cy="66.3" rx="1.5" ry="0.5" fill="#f2f5fa" fill-opacity="0.84" transform="rotate(-14 56.8 66.3)"/><ellipse cx="77.1" cy="49.3" rx="3.2" ry="1.2" fill="#f2f5fa" fill-opacity="0.76" transform="rotate(10 77.1 49.3)"/><ellipse cx="71.9" cy="54.5" rx="2.3" ry="1.0" fill="#f2f5fa" fill-opacity="0.64" transform="rotate(-6 71.9 54.5)"/><ellipse cx="75.5" cy="65.3" rx="2.9" ry="1.1" fill="#f2f5fa" fill-opacity="0.67" transform="rotate(-12 75.5 65.3)"/><ellipse cx="72.6" cy="46.1" rx="1.8" ry="0.6" fill="#f2f5fa" fill-opacity="0.71" transform="rotate(15 72.6 46.1)"/><ellipse cx="16.2" cy="50.8" rx="2.0" ry="0.9" fill="#f2f5fa" fill-opacity="0.67" transform="rotate(-10 16.2 50.8)"/><ellipse cx="62.2" cy="65.7" rx="1.8" ry="0.6" fill="#f2f5fa" fill-opacity="0.69" transform="rotate(13 62.2 65.7)"/><ellipse cx="15.4" cy="48.2" rx="2.6" ry="1.2" fill="#f2f5fa" fill-opacity="0.71" transform="rotate(-14 15.4 48.2)"/><ellipse cx="51.8" cy="47.3" rx="1.6" ry="0.5" fill="#f2f5fa" fill-opacity="0.88" transform="rotate(-12 51.8 47.3)"/><ellipse cx="46.2" cy="63.9" rx="1.8" ry="0.7" fill="#f2f5fa" fill-opacity="0.83" transform="rotate(2 46.2 63.9)"/><ellipse cx="25.4" cy="57.3" rx="3.2" ry="1.5" fill="#f2f5fa" fill-opacity="0.89" transform="rotate(-14 25.4 57.3)"/><ellipse cx="15.3" cy="71.5" rx="2.1" ry="0.7" fill="#f4f2ee" fill-opacity="0.39"/><ellipse cx="51.7" cy="77.2" rx="3.7" ry="1.2" fill="#f4f2ee" fill-opacity="0.35"/><ellipse cx="43.9" cy="74.9" rx="3.9" ry="0.9" fill="#f4f2ee" fill-opacity="0.56"/><ellipse cx="37.5" cy="77.7" rx="3.3" ry="1.1" fill="#f4f2ee" fill-opacity="0.34"/><ellipse cx="60.9" cy="78.3" rx="4.5" ry="1.2" fill="#f4f2ee" fill-opacity="0.59"/><ellipse cx="82.5" cy="76.3" rx="2.9" ry="0.6" fill="#f4f2ee" fill-opacity="0.48"/><ellipse cx="20.9" cy="64.9" rx="4.2" ry="1.4" fill="#f4f2ee" fill-opacity="0.38"/><ellipse cx="71.8" cy="78.4" rx="5.8" ry="1.2" fill="#f4f2ee" fill-opacity="0.34"/><ellipse cx="81.7" cy="78.5" rx="2.7" ry="0.6" fill="#f4f2ee" fill-opacity="0.51"/><ellipse cx="18.2" cy="65.6" rx="2.6" ry="0.8" fill="#f4f2ee" fill-opacity="0.41"/><ellipse cx="73.3" cy="66.3" rx="5.6" ry="1.8" fill="#f4f2ee" fill-opacity="0.41"/><ellipse cx="55.7" cy="74.2" rx="2.5" ry="0.8" fill="#f4f2ee" fill-opacity="0.43"/><ellipse cx="49.1" cy="76.8" rx="2.1" ry="0.5" fill="#f4f2ee" fill-opacity="0.31"/><ellipse cx="65.5" cy="67.3" rx="4.9" ry="1.5" fill="#f4f2ee" fill-opacity="0.60"/><ellipse cx="24.3" cy="70.2" rx="5.2" ry="1.4" fill="#f4f2ee" fill-opacity="0.35"/><ellipse cx="60.9" cy="75.9" rx="3.8" ry="1.0" fill="#f4f2ee" fill-opacity="0.34"/><ellipse cx="41.0" cy="76.6" rx="3.4" ry="1.2" fill="#f4f2ee" fill-opacity="0.41"/><ellipse cx="46.2" cy="75.7" rx="5.6" ry="1.8" fill="#f4f2ee" fill-opacity="0.43"/><ellipse cx="44.4" cy="65.9" rx="4.2" ry="1.3" fill="#f4f2ee" fill-opacity="0.36"/><ellipse cx="34.3" cy="65.0" rx="3.8" ry="1.0" fill="#f4f2ee" fill-opacity="0.60"/><ellipse cx="60.6" cy="77.8" rx="2.8" ry="0.7" fill="#f4f2ee" fill-opacity="0.51"/><ellipse cx="16.5" cy="72.6" rx="4.5" ry="0.9" fill="#f4f2ee" fill-opacity="0.36"/><ellipse cx="69.0" cy="66.4" rx="4.6" ry="1.2" fill="#f4f2ee" fill-opacity="0.42"/><ellipse cx="75.8" cy="69.9" rx="5.5" ry="1.8" fill="#f4f2ee" fill-opacity="0.47"/><ellipse cx="18.5" cy="69.0" rx="5.8" ry="1.4" fill="#f4f2ee" fill-opacity="0.48"/><ellipse cx="25.9" cy="75.0" rx="4.8" ry="1.6" fill="#f4f2ee" fill-opacity="0.48"/><ellipse cx="19.2" cy="75.9" rx="4.3" ry="1.5" fill="#f4f2ee" fill-opacity="0.46"/><ellipse cx="35.0" cy="70.6" rx="4.2" ry="1.3" fill="#f4f2ee" fill-opacity="0.49"/><ellipse cx="74.8" cy="72.0" rx="2.8" ry="0.9" fill="#f4f2ee" fill-opacity="0.51"/><ellipse cx="22.7" cy="70.9" rx="5.4" ry="1.5" fill="#f4f2ee" fill-opacity="0.34"/><ellipse cx="75.1" cy="75.0" rx="2.8" ry="0.8" fill="#f4f2ee" fill-opacity="0.56"/><ellipse cx="53.6" cy="78.2" rx="4.2" ry="0.8" fill="#f4f2ee" fill-opacity="0.50"/><ellipse cx="72.4" cy="77.7" rx="5.0" ry="1.7" fill="#f4f2ee" fill-opacity="0.54"/><ellipse cx="46.1" cy="64.9" rx="2.7" ry="0.6" fill="#f4f2ee" fill-opacity="0.58"/><ellipse cx="70.7" cy="77.6" rx="5.1" ry="1.4" fill="#f4f2ee" fill-opacity="0.47"/><ellipse cx="12.9" cy="66.4" rx="3.6" ry="0.7" fill="#f4f2ee" fill-opacity="0.40"/><ellipse cx="49.4" cy="66.4" rx="2.7" ry="0.6" fill="#f4f2ee" fill-opacity="0.44"/><ellipse cx="72.9" cy="70.7" rx="4.8" ry="1.5" fill="#f4f2ee" fill-opacity="0.54"/><ellipse cx="69.9" cy="71.5" rx="2.2" ry="0.5" fill="#f4f2ee" fill-opacity="0.38"/><ellipse cx="35.9" cy="73.0" rx="4.0" ry="1.0" fill="#f4f2ee" fill-opacity="0.35"/><ellipse cx="65.6" cy="78.9" rx="4.8" ry="1.1" fill="#f4f2ee" fill-opacity="0.51"/><ellipse cx="70.2" cy="72.1" rx="4.5" ry="1.5" fill="#f4f2ee" fill-opacity="0.44"/><ellipse cx="63.3" cy="66.5" rx="5.3" ry="1.5" fill="#f4f2ee" fill-opacity="0.36"/><ellipse cx="57.2" cy="76.4" rx="3.8" ry="0.9" fill="#f4f2ee" fill-opacity="0.51"/><ellipse cx="84.6" cy="78.4" rx="3.2" ry="0.9" fill="#f4f2ee" fill-opacity="0.41"/><ellipse cx="21.5" cy="72.2" rx="3.2" ry="0.9" fill="#f4f2ee" fill-opacity="0.55"/><ellipse cx="52.1" cy="78.8" rx="2.8" ry="0.6" fill="#f4f2ee" fill-opacity="0.32"/><ellipse cx="63.2" cy="68.3" rx="2.9" ry="0.8" fill="#f4f2ee" fill-opacity="0.60"/><ellipse cx="66.7" cy="78.4" rx="5.7" ry="1.6" fill="#f4f2ee" fill-opacity="0.37"/><ellipse cx="67.6" cy="67.3" rx="2.3" ry="0.6" fill="#f4f2ee" fill-opacity="0.52"/><ellipse cx="57.8" cy="38.9" rx="1.2" ry="0.4" fill="#5f78bc" fill-opacity="0.56" transform="rotate(-0 57.8 38.9)"/><ellipse cx="51.1" cy="54.2" rx="1.8" ry="0.9" fill="#5f78bc" fill-opacity="0.67" transform="rotate(1 51.1 54.2)"/><ellipse cx="37.7" cy="43.2" rx="1.3" ry="0.5" fill="#5f78bc" fill-opacity="0.60" transform="rotate(-2 37.7 43.2)"/><ellipse cx="12.7" cy="38.1" rx="1.4" ry="0.5" fill="#5f78bc" fill-opacity="0.36" transform="rotate(5 12.7 38.1)"/><ellipse cx="70.6" cy="58.6" rx="1.8" ry="0.6" fill="#5f78bc" fill-opacity="0.57" transform="rotate(-9 70.6 58.6)"/><ellipse cx="28.1" cy="35.1" rx="1.2" ry="0.4" fill="#5f78bc" fill-opacity="0.70" transform="rotate(-17 28.1 35.1)"/><ellipse cx="82.9" cy="51.8" rx="2.0" ry="0.7" fill="#5f78bc" fill-opacity="0.59" transform="rotate(-12 82.9 51.8)"/><ellipse cx="48.6" cy="40.9" rx="2.3" ry="0.7" fill="#5f78bc" fill-opacity="0.35" transform="rotate(3 48.6 40.9)"/><ellipse cx="49.9" cy="49.8" rx="1.1" ry="0.4" fill="#5f78bc" fill-opacity="0.60" transform="rotate(4 49.9 49.8)"/><ellipse cx="34.4" cy="20.4" rx="1.1" ry="0.5" fill="#5f78bc" fill-opacity="0.45" transform="rotate(-17 34.4 20.4)"/><ellipse cx="32.6" cy="29.7" rx="1.8" ry="0.5" fill="#5f78bc" fill-opacity="0.54" transform="rotate(6 32.6 29.7)"/><ellipse cx="50.7" cy="47.5" rx="1.3" ry="0.5" fill="#5f78bc" fill-opacity="0.61" transform="rotate(-9 50.7 47.5)"/><ellipse cx="72.1" cy="28.7" rx="1.7" ry="0.8" fill="#5f78bc" fill-opacity="0.58" transform="rotate(-9 72.1 28.7)"/><ellipse cx="38.1" cy="33.0" rx="2.1" ry="0.8" fill="#5f78bc" fill-opacity="0.64" transform="rotate(8 38.1 33.0)"/><ellipse cx="72.5" cy="44.4" rx="1.4" ry="0.6" fill="#5f78bc" fill-opacity="0.50" transform="rotate(-18 72.5 44.4)"/><ellipse cx="44.3" cy="28.6" rx="1.1" ry="0.4" fill="#5f78bc" fill-opacity="0.68" transform="rotate(7 44.3 28.6)"/><ellipse cx="43.1" cy="46.8" rx="1.5" ry="0.6" fill="#5f78bc" fill-opacity="0.44" transform="rotate(14 43.1 46.8)"/><ellipse cx="69.8" cy="40.4" rx="1.8" ry="0.7" fill="#5f78bc" fill-opacity="0.62" transform="rotate(13 69.8 40.4)"/><ellipse cx="79.5" cy="24.9" rx="2.3" ry="0.8" fill="#5f78bc" fill-opacity="0.39" transform="rotate(-3 79.5 24.9)"/><ellipse cx="58.9" cy="25.3" rx="1.9" ry="0.9" fill="#5f78bc" fill-opacity="0.62" transform="rotate(13 58.9 25.3)"/><ellipse cx="22.7" cy="35.5" rx="1.3" ry="0.5" fill="#5f78bc" fill-opacity="0.66" transform="rotate(20 22.7 35.5)"/><ellipse cx="30.6" cy="45.8" rx="1.9" ry="0.9" fill="#5f78bc" fill-opacity="0.51" transform="rotate(-15 30.6 45.8)"/><ellipse cx="18.3" cy="26.7" rx="1.7" ry="0.5" fill="#5f78bc" fill-opacity="0.59" transform="rotate(-12 18.3 26.7)"/><ellipse cx="14.1" cy="53.1" rx="1.6" ry="0.7" fill="#5f78bc" fill-opacity="0.55" transform="rotate(-5 14.1 53.1)"/><ellipse cx="16.2" cy="59.3" rx="2.0" ry="0.7" fill="#5f78bc" fill-opacity="0.38" transform="rotate(5 16.2 59.3)"/><ellipse cx="79.8" cy="54.2" rx="2.3" ry="1.1" fill="#5f78bc" fill-opacity="0.39" transform="rotate(-13 79.8 54.2)"/><ellipse cx="45.5" cy="25.1" rx="1.7" ry="0.8" fill="#5f78bc" fill-opacity="0.44" transform="rotate(13 45.5 25.1)"/><ellipse cx="29.8" cy="57.5" rx="1.1" ry="0.4" fill="#5f78bc" fill-opacity="0.37" transform="rotate(3 29.8 57.5)"/><ellipse cx="12.7" cy="51.9" rx="1.6" ry="0.8" fill="#5f78bc" fill-opacity="0.48" transform="rotate(13 12.7 51.9)"/><ellipse cx="66.7" cy="37.2" rx="2.1" ry="0.9" fill="#5f78bc" fill-opacity="0.56" transform="rotate(-3 66.7 37.2)"/><ellipse cx="22.4" cy="44.0" rx="1.7" ry="0.7" fill="#5f78bc" fill-opacity="0.69" transform="rotate(-13 22.4 44.0)"/><ellipse cx="78.4" cy="45.7" rx="1.1" ry="0.5" fill="#5f78bc" fill-opacity="0.42" transform="rotate(-0 78.4 45.7)"/><ellipse cx="46.5" cy="55.5" rx="2.3" ry="0.7" fill="#5f78bc" fill-opacity="0.66" transform="rotate(17 46.5 55.5)"/><ellipse cx="22.2" cy="23.7" rx="1.6" ry="0.5" fill="#5f78bc" fill-opacity="0.39" transform="rotate(0 22.2 23.7)"/><ellipse cx="26.5" cy="47.6" rx="1.3" ry="0.6" fill="#5f78bc" fill-opacity="0.57" transform="rotate(-17 26.5 47.6)"/><ellipse cx="61.7" cy="62.4" rx="2.4" ry="0.7" fill="#5f78bc" fill-opacity="0.59" transform="rotate(-7 61.7 62.4)"/><ellipse cx="41.9" cy="41.2" rx="1.1" ry="0.5" fill="#5f78bc" fill-opacity="0.40" transform="rotate(14 41.9 41.2)"/><ellipse cx="18.5" cy="48.6" rx="1.8" ry="0.5" fill="#5f78bc" fill-opacity="0.39" transform="rotate(-0 18.5 48.6)"/><ellipse cx="39.9" cy="27.1" rx="1.1" ry="0.4" fill="#5f78bc" fill-opacity="0.63" transform="rotate(-15 39.9 27.1)"/><ellipse cx="67.0" cy="25.3" rx="2.1" ry="1.0" fill="#5f78bc" fill-opacity="0.66" transform="rotate(-4 67.0 25.3)"/><ellipse cx="83.1" cy="39.1" rx="1.9" ry="0.9" fill="#5f78bc" fill-opacity="0.40" transform="rotate(-18 83.1 39.1)"/><ellipse cx="62.4" cy="30.4" rx="1.3" ry="0.5" fill="#5f78bc" fill-opacity="0.41" transform="rotate(-9 62.4 30.4)"/><ellipse cx="26.0" cy="24.2" rx="2.1" ry="1.0" fill="#5f78bc" fill-opacity="0.61" transform="rotate(-2 26.0 24.2)"/><ellipse cx="79.2" cy="45.0" rx="1.8" ry="0.5" fill="#5f78bc" fill-opacity="0.47" transform="rotate(-11 79.2 45.0)"/><ellipse cx="59.7" cy="64.3" rx="1.9" ry="0.7" fill="#5f78bc" fill-opacity="0.64" transform="rotate(-17 59.7 64.3)"/><ellipse cx="70.6" cy="22.0" rx="2.4" ry="1.1" fill="#5f78bc" fill-opacity="0.69" transform="rotate(-1 70.6 22.0)"/><ellipse cx="59.7" cy="38.4" rx="2.1" ry="0.8" fill="#5f78bc" fill-opacity="0.51" transform="rotate(12 59.7 38.4)"/><ellipse cx="80.6" cy="32.8" rx="1.4" ry="0.7" fill="#5f78bc" fill-opacity="0.47" transform="rotate(-5 80.6 32.8)"/><ellipse cx="51.5" cy="33.3" rx="1.6" ry="0.6" fill="#5f78bc" fill-opacity="0.50" transform="rotate(12 51.5 33.3)"/><ellipse cx="67.5" cy="62.8" rx="2.3" ry="0.8" fill="#5f78bc" fill-opacity="0.62" transform="rotate(8 67.5 62.8)"/><ellipse cx="57.3" cy="42.4" rx="2.3" ry="0.9" fill="#5f78bc" fill-opacity="0.68" transform="rotate(-16 57.3 42.4)"/><ellipse cx="37.5" cy="26.1" rx="2.0" ry="0.8" fill="#5f78bc" fill-opacity="0.46" transform="rotate(-7 37.5 26.1)"/><ellipse cx="46.8" cy="34.1" rx="1.7" ry="0.7" fill="#5f78bc" fill-opacity="0.36" transform="rotate(-11 46.8 34.1)"/><ellipse cx="49.8" cy="50.5" rx="1.8" ry="0.8" fill="#5f78bc" fill-opacity="0.50" transform="rotate(16 49.8 50.5)"/><ellipse cx="67.8" cy="43.2" rx="1.8" ry="0.8" fill="#5f78bc" fill-opacity="0.45" transform="rotate(-9 67.8 43.2)"/><ellipse cx="47.9" cy="43.3" rx="1.1" ry="0.4" fill="#5f78bc" fill-opacity="0.67" transform="rotate(15 47.9 43.3)"/><ellipse cx="50.9" cy="52.2" rx="1.5" ry="0.5" fill="#5f78bc" fill-opacity="0.64" transform="rotate(2 50.9 52.2)"/><ellipse cx="56.2" cy="48.2" rx="2.4" ry="0.9" fill="#5f78bc" fill-opacity="0.55" transform="rotate(9 56.2 48.2)"/><ellipse cx="61.8" cy="61.9" rx="1.1" ry="0.5" fill="#5f78bc" fill-opacity="0.36" transform="rotate(-7 61.8 61.9)"/><ellipse cx="37.1" cy="56.8" rx="2.2" ry="0.9" fill="#5f78bc" fill-opacity="0.54" transform="rotate(7 37.1 56.8)"/><ellipse cx="13.0" cy="37.1" rx="1.6" ry="0.5" fill="#5f78bc" fill-opacity="0.46" transform="rotate(-9 13.0 37.1)"/><ellipse cx="20.5" cy="28.7" rx="1.5" ry="0.7" fill="#5f78bc" fill-opacity="0.65" transform="rotate(-7 20.5 28.7)"/><ellipse cx="69.2" cy="52.8" rx="1.1" ry="0.4" fill="#5f78bc" fill-opacity="0.66" transform="rotate(-14 69.2 52.8)"/><ellipse cx="57.4" cy="46.9" rx="2.1" ry="1.0" fill="#5f78bc" fill-opacity="0.64" transform="rotate(-15 57.4 46.9)"/><ellipse cx="64.5" cy="61.2" rx="1.9" ry="0.9" fill="#5f78bc" fill-opacity="0.38" transform="rotate(-1 64.5 61.2)"/><ellipse cx="82.6" cy="33.9" rx="1.5" ry="0.5" fill="#5f78bc" fill-opacity="0.48" transform="rotate(-3 82.6 33.9)"/><ellipse cx="48.4" cy="31.8" rx="1.7" ry="0.8" fill="#5f78bc" fill-opacity="0.47" transform="rotate(-10 48.4 31.8)"/><ellipse cx="78.8" cy="52.6" rx="2.1" ry="1.0" fill="#5f78bc" fill-opacity="0.69" transform="rotate(-8 78.8 52.6)"/><ellipse cx="11.1" cy="53.9" rx="1.9" ry="0.7" fill="#5f78bc" fill-opacity="0.67" transform="rotate(12 11.1 53.9)"/><ellipse cx="53.2" cy="48.2" rx="1.6" ry="0.5" fill="#5f78bc" fill-opacity="0.45" transform="rotate(9 53.2 48.2)"/></g>
 <path d="M18 83 L22 81.6 L30 81 L36 80.4 L40 79.6 L43 79.8 L45 78.9 L48 79.3 L51 79 L54 79.8 L58 80.3 L62 80.9 L66 81.6 L69 82.4 L69 83 Z" fill="#22222a"/>
 <path d="M9.5 82.5 V20 H15.5 L13.5 16.3 H83.5 L79 20 H86.5 V82.5 H79 L83.5 85.6 H13.5 L15.5 82.5 Z" fill="none" stroke="#d2def2" stroke-width="2.3" stroke-linejoin="miter"/>
 <path d="M28 20 L42 9 L58 8 L69 19 L69 36.5 L57 37 L38 28 Z" fill="url(#stripes)"/>
 <ellipse cx="34.3" cy="18.4" rx="8.6" ry="5.6" fill="url(#lface)" stroke="#4a5a80" stroke-width="0.7"/>
 <path d="M25.5 7 Q28 2 37 1.6 Q45 1.4 49 4.5 Q46 8.5 40 9.5 Q35 10 31 12 Q26 11 25.5 7 Z" fill="url(#lface)" stroke="#4a5a80" stroke-width="0.6"/>
 <path d="M29 6.5 Q33 3.5 38 5 Q35 7.5 31 8.2 M40 4 Q44 3 46.5 5 M36 11 Q40 13 37.5 16.5" fill="none" stroke="#3f62a4" stroke-width="1.3" stroke-linecap="round"/>
 <path d="M44 9 Q47 6 50 8 Q52 14 50 21 Q47 24 44.5 22 Q46 16 44 9 Z" fill="url(#lface)" stroke="#4a5a80" stroke-width="0.6"/>
 <path d="M52 13 Q58 9 63 11 Q64 14 60 16 Q56 19 55 23 Q53 21 52 13 Z" fill="url(#lface)" stroke="#4a5a80" stroke-width="0.6"/>
 <path d="M50 25.5 Q54 23 59 23.8 Q57 27.5 52 28.2 Z" fill="#eef3fa" stroke="#4a5a80" stroke-width="0.5"/>
 <path d="M62 35 L70 40" stroke="#dce6f4" stroke-width="0.5"/>
 <circle cx="91.7" cy="4.5" r="0.5" fill="#e8e8f4"/>
 <text x="48" y="93" text-anchor="middle" font-family="Liberation Sans" font-size="5.1" font-weight="bold" fill="#d0dcf6" letter-spacing="-0.1">Power And The Passion</text>
</svg>

<div class="t" style="left:492px;top:261px">JPEG image (138.1 kB – 500×500 pixels)</div>
<div class="t" style="left:492px;top:279px">Type: Cover (front)</div>
<div class="t" style="left:492px;top:297px">Description: cover.jpg</div>

<div class="a" style="left:391px;top:588px;width:452px;height:1px;background:#222"></div>
<div class="a" style="left:392px;top:238px;width:1px;height:391px;background:#282828"></div>
<div class="a" style="left:842px;top:238px;width:1px;height:391px;background:#282828"></div>
<div class="a" style="left:392px;top:629px;width:451px;height:1px;background:#282828"></div>
<div class="a" style="left:395px;top:592px;width:210px;height:34px;border:1px solid #1f1f1f;border-radius:5px;background:#353535"></div>
<div class="a" style="left:437px;top:593px;width:1px;height:32px;background:#1f1f1f"></div>
<div class="a" style="left:479px;top:593px;width:1px;height:32px;background:#1f1f1f"></div>
<div class="a" style="left:521px;top:593px;width:1px;height:32px;background:#1f1f1f"></div>
<div class="a" style="left:563px;top:593px;width:1px;height:32px;background:#1f1f1f"></div>
<svg style="left:0;top:0" width="846" height="656" viewBox="0 0 846 656">
 <rect x="405" y="607.5" width="22" height="3" fill="#a8a8a8"/>
 <rect x="414.5" y="598" width="3" height="22" fill="#a8a8a8"/>
 <rect x="447.5" y="607.5" width="21" height="3" fill="#6a6a6a"/>
 <g fill="none" stroke="#6a6a6a" stroke-width="2.6" stroke-linecap="round" stroke-linejoin="round">
  <path d="M500 598 V614.5 M495 609.8 L500 615 L505 609.8"/>
 </g>
 <rect x="489" y="618" width="21.5" height="2.6" fill="#6a6a6a"/>
 <path d="M541 619.1 H535.5 Q533.3 619.1 533.3 617 V600.8 Q533.3 598.7 535.5 598.7 H545 L550.9 604.6 V615.5" fill="none" stroke="#6a6a6a" stroke-width="3.4" stroke-linecap="round" stroke-linejoin="round"/>
 <circle cx="541.2" cy="611.4" r="4.6" fill="#6a6a6a"/><path d="M542.6 613.6 L546.4 620.6 H551.6 L545.6 610 Z" fill="#6a6a6a"/><circle cx="540.6" cy="607.4" r="2.5" fill="#353535"/><path d="M538.6 606.2 L540.6 603 L543.2 604.5 Z" fill="#353535"/>
 <rect x="576.6" y="598.6" width="14.8" height="11.7" rx="1.6" fill="none" stroke="#a6a6a6" stroke-width="3"/>
 <path d="M579.2 607.6 L581.7 603.8 L583.4 605.6 L585.6 602.9 L588.6 607.6 Z" fill="#a6a6a6"/>
 <path d="M579.2 615 H588.8 L584 621 Z" fill="#a6a6a6"/>
</svg>
</body></html>
